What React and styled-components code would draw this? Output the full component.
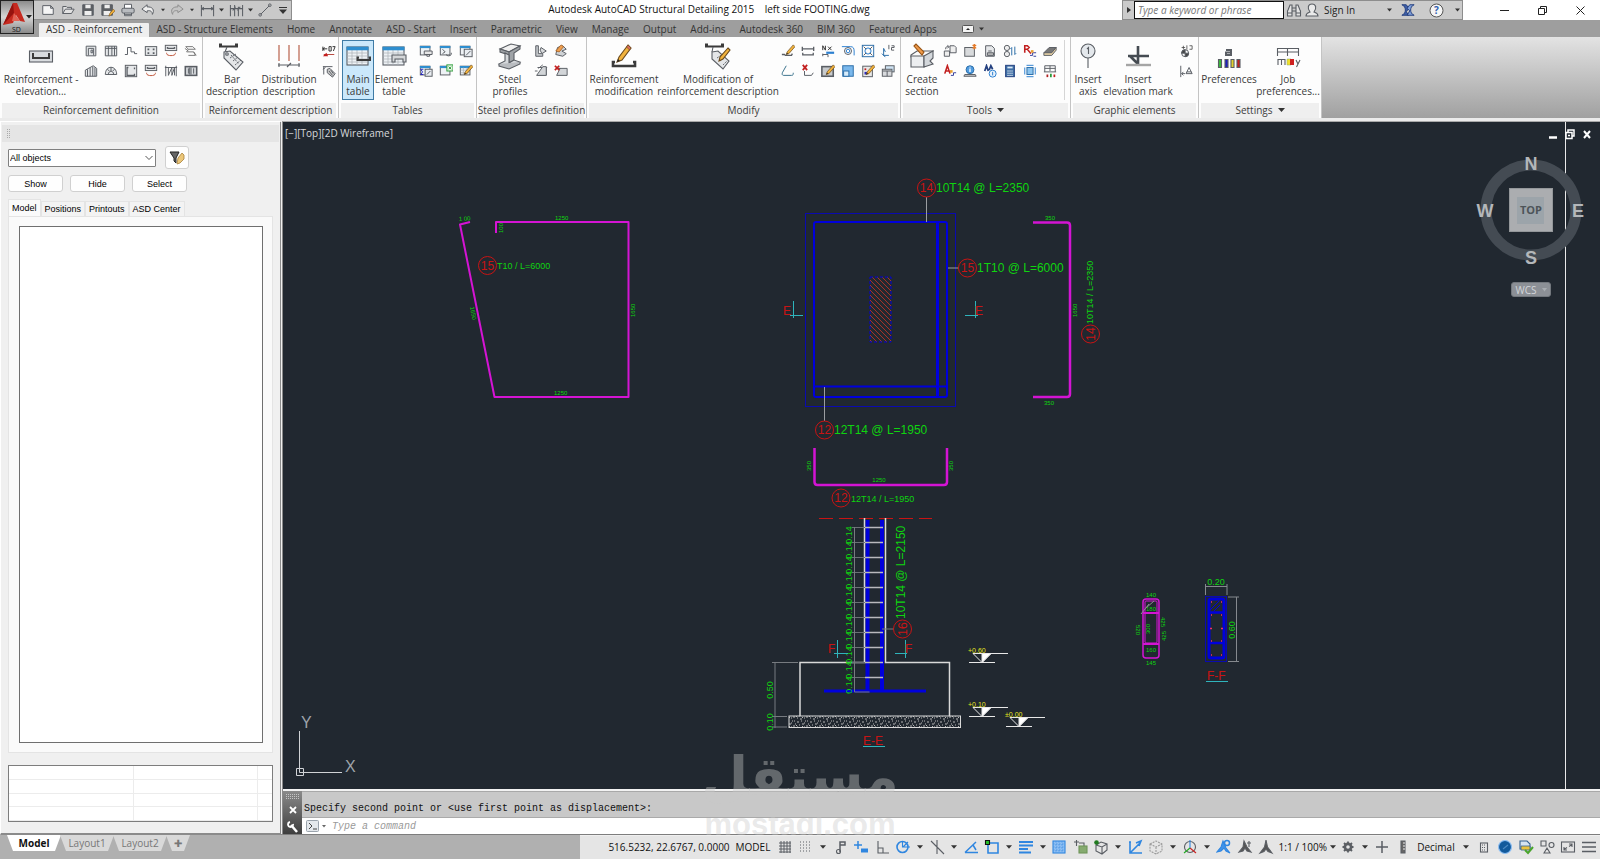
import React, { useState } from 'react';
import styled, { createGlobalStyle } from 'styled-components';

const GlobalStyle = createGlobalStyle`
  * {
    box-sizing: border-box;
  }
  html, body, #root {
    height: 100%;
    margin: 0;
  }
  body {
    overflow: hidden;
    background: #f0f0f0;
    font-family: 'Open Sans', 'Noto Sans', sans-serif;
    font-size: 10px;
    color: #2c2c2c;
  }
  button, input, select {
    font: inherit;
    color: inherit;
  }
  svg {
    display: block;
    flex: none;
  }
`;

const Window = styled.div`
  display: flex;
  flex-direction: column;
  height: 100vh;
`;

const PlainButton = styled.button`
  display: flex;
  align-items: center;
  justify-content: center;
  flex: none;
  padding: 0;
  border: 0;
  background: transparent;
`;

/* ---------- title bar ---------- */

const TitleBar = styled.header`
  display: flex;
  height: 20px;
  background: #fff;
`;

const AppButton = styled(PlainButton)`
  position: relative;
  z-index: 2;
  width: 34px;
  height: 34px;
  border: 1px solid #222;
  background: linear-gradient(#8c8c8c, #d6d6d6 50%, #8a8a8a);
`;

const QuickAccess = styled.div`
  display: flex;
  align-items: center;
  height: 20px;
  padding-left: 4px;
  padding-right: 1px;
  background: #c9c9c9;
  border: 1px solid #8d8d8d;
  border-left: 0;
`;

const BarButton = styled(PlainButton)`
  width: ${(p) => p.$width || 20}px;
  height: 18px;
`;

const Title = styled.h1`
  flex: 1;
  margin: 0;
  padding-left: 4px;
  text-align: center;
  font-size: 10px;
  font-weight: 400;
  line-height: 18px;
  white-space: pre;
  color: #111;
`;

const InfoCenter = styled.div`
  display: flex;
  align-items: center;
  width: 341px;
  height: 20px;
  background: #cbcbcb;
  border: 1px solid #8d8d8d;
`;

const Search = styled.input`
  width: 150px;
  height: 18px;
  padding: 0 3px;
  border: 1px solid #111;
  border-radius: 0;
  background: #fff;
  &::placeholder {
    color: #777;
    font-style: italic;
  }
`;

const SignIn = styled(PlainButton)`
  flex: 1;
  gap: 4px;
  justify-content: flex-start;
  color: #222;
  svg:last-child {
    margin-left: auto;
    margin-right: 4px;
  }
`;

const WindowButtons = styled.div`
  display: flex;
  padding-left: 22px;
  width: 137px;
`;

const WindowButton = styled(PlainButton)`
  width: 38px;
  height: 20px;
`;

/* ---------- ribbon ---------- */

const TabBar = styled.nav`
  display: flex;
  align-items: flex-end;
  height: 17px;
  padding-left: 39px;
  background: #9e9e9e;
`;

const RibbonTab = styled.button`
  height: 14px;
  padding: 0 7px 2px;
  border: 0;
  border-radius: 1px 1px 0 0;
  line-height: 12px;
  white-space: nowrap;
  color: #333;
  background: ${(p) => (p.$active ? '#efefef' : 'transparent')};
`;

const TabExtra = styled(PlainButton)`
  gap: 5px;
  height: 14px;
  padding-bottom: 2px;
  margin-left: 18px;
`;

const Ribbon = styled.section`
  display: flex;
  height: 84px;
  border-bottom: 3px solid #ebebeb;
  background: linear-gradient(#e3e3e3, #a0a0a0);
`;

const Panel = styled.section`
  display: flex;
  flex-direction: column;
  flex: none;
  width: ${(p) => p.$width}px;
  border-right: 1px solid #c4c4c4;
  background: #fdfdfd;
`;

const PanelBody = styled.div`
  display: flex;
  flex: 1;
  padding: 3px 0;
  padding-left: ${(p) => p.$pad || 3}px;
`;

const PanelTitle = styled.h2`
  display: flex;
  align-items: center;
  justify-content: center;
  gap: 5px;
  height: 15px;
  margin: 0 2px;
  padding-bottom: 2px;
  font-size: 10px;
  font-weight: 400;
  white-space: nowrap;
  background: #efefef;
  color: #3c3c3c;
`;

const BigButton = styled.button`
  display: flex;
  flex-direction: column;
  align-items: center;
  flex: none;
  width: ${(p) => p.$width}px;
  padding: 0;
  border: 1px solid ${(p) => (p.$active ? '#3f7ba5' : 'transparent')};
  background: ${(p) => (p.$active ? '#cbe8fb' : 'transparent')};
  line-height: 12px;
  white-space: pre;
  color: #3a3a3a;
`;

const IconGrid = styled.div`
  display: grid;
  grid-template-rows: 20px 20px;
  grid-auto-columns: 20px;
  grid-auto-flow: column;
  margin-top: 1px;
  margin-left: ${(p) => p.$gap || 0}px;
`;

const GridButton = styled(PlainButton)`
  width: 20px;
  height: 20px;
`;

const ToolsRule = styled.div`
  width: 1px;
  margin-left: 4px;
  background: #d5d5d5;
`;

/* ---------- palette ---------- */

const Workspace = styled.main`
  position: relative;
  display: flex;
  flex: 1;
  min-height: 0;
  overflow: hidden;
`;

const Palette = styled.aside`
  display: flex;
  flex-direction: column;
  flex: none;
  width: 283px;
  padding: 0 7px 11px;
  border: 1px solid #fff;
  border-right: 3px double #8b8b8b;
  border-bottom: 2px solid #8b8b8b;
  background: #f0f0f0;
  font-family: 'Liberation Sans', Arial, sans-serif;
  font-size: 9px;
  color: #000;
`;

const Grip = styled.div`
  display: flex;
  align-items: center;
  height: 17px;
  margin: 3px -6px 0;
  padding-left: 5px;
  background: #e5e5e5;
`;

const FilterRow = styled.div`
  display: flex;
  align-items: center;
  gap: 9px;
  margin-top: 4px;
`;

const SelectWrap = styled.div`
  position: relative;
  width: 148px;
  svg {
    position: absolute;
    right: 3px;
    top: 5px;
    pointer-events: none;
  }
`;

const ObjectSelect = styled.select`
  appearance: none;
  display: block;
  width: 100%;
  height: 18px;
  padding: 0 1px;
  border: 1px solid #808080;
  border-radius: 1px;
  background: #fff;
`;

const PushButton = styled.button`
  width: ${(p) => p.$width || 55}px;
  height: ${(p) => p.$height || 17}px;
  display: flex;
  align-items: center;
  justify-content: center;
  padding: 0;
  border: 1px solid #d0d0d0;
  border-radius: 3px;
  background: #fefefe;
`;

const ButtonRow = styled.div`
  display: flex;
  gap: 7px;
  margin-top: 6px;
`;

const PaletteTabs = styled.div`
  display: flex;
  align-items: flex-end;
  height: 17px;
  margin-top: 7px;
`;

const PaletteTab = styled.button`
  height: ${(p) => (p.$active ? 17 : 15)}px;
  padding: 0 3px;
  border: 1px solid #e4e4e4;
  border-bottom: 0;
  white-space: nowrap;
  background: ${(p) => (p.$active ? '#fafafa' : '#f3f3f3')};
`;

const TabPage = styled.div`
  flex: 1;
  display: flex;
  padding: 9px 9px 9px 10px;
  border: 1px solid #e4e4e4;
  background: #fafafa;
`;

const Tree = styled.div`
  flex: 1;
  border: 1px solid #6f6f6f;
  background: #fff;
`;

const PropertyTable = styled.table`
  height: 57px;
  margin-top: 12px;
  border: 1px solid #7d7d7d;
  border-spacing: 0;
  table-layout: fixed;
  background: #fff;
  td {
    padding: 0;
    border-right: 1px solid #ececec;
    border-bottom: 1px solid #ececec;
  }
  td:last-child {
    width: 14px;
    border-right: 0;
  }
`;

/* ---------- drawing ---------- */

const DrawingColumn = styled.div`
  display: flex;
  flex-direction: column;
  flex: 1;
  min-width: 0;
`;

const Viewport = styled.div`
  position: relative;
  flex: 1;
  min-height: 0;
  overflow: hidden;
  border-top: 1px solid #a9a9a9;
  background: #212830;
`;

const Sheet = styled.svg`
  width: 100%;
  height: 100%;
  font-family: 'Liberation Sans', Arial, sans-serif;
`;

const ViewLabel = styled.div`
  position: absolute;
  left: 2px;
  top: 4px;
  line-height: 14px;
  color: #d8dadd;
`;

const ViewButtons = styled.div`
  position: absolute;
  top: 6px;
  right: 7px;
  display: flex;
  gap: 5px;
`;

const CubeArea = styled.div`
  position: absolute;
  top: 28px;
  right: 14px;
  display: flex;
  flex-direction: column;
  align-items: center;
  gap: 12px;
`;

const Wcs = styled(PlainButton)`
  width: 40px;
  height: 15px;
  gap: 5px;
  border: 1px solid #73787e;
  border-radius: 3px;
  background: #8c9096;
  color: #d3d6da;
`;

const Command = styled.section`
  display: flex;
  height: 46px;
  border-top: 2px solid #f2f2f2;
  border-bottom: 1px solid #7d7d7d;
  font-family: 'Liberation Mono', monospace;
`;

const CommandHandle = styled.div`
  display: flex;
  flex-direction: column;
  align-items: center;
  justify-content: space-between;
  width: 19px;
  padding: 3px 0 1px;
  background: linear-gradient(#8a8a8a, #3e3e3e);
`;

const CommandBody = styled.div`
  display: flex;
  flex-direction: column;
  flex: 1;
`;

const History = styled.div`
  height: 27px;
  padding: 9px 2px 0;
  line-height: 16px;
  border-top: 1px solid #a8a8a8;
  border-bottom: 1px solid #aaa;
  background: #c8c8c8;
  color: #111;
`;

const CommandLine = styled.div`
  display: flex;
  align-items: center;
  flex: 1;
  gap: 2px;
  padding-left: 4px;
  background: #fff;
`;

const CommandInput = styled.input`
  flex: 1;
  height: 14px;
  border: 0;
  padding: 0 4px;
  outline: none;
  &::placeholder {
    color: #9a9a9a;
    font-style: italic;
  }
`;

const Watermark = styled.div`
  position: absolute;
  left: 0;
  right: 0;
  bottom: -8px;
  display: flex;
  flex-direction: column;
  align-items: center;
  pointer-events: none;
  color: rgba(200, 200, 200, 0.4);
  font-weight: 700;
`;

const WatermarkArabic = styled.span`
  font-family: 'DejaVu Sans', sans-serif;
  font-size: 54px;
  line-height: 60px;
`;

const WatermarkLatin = styled.span`
  font-family: 'Liberation Sans', Arial, sans-serif;
  font-size: 31px;
  line-height: 36px;
`;

/* ---------- status bar ---------- */

const StatusBar = styled.footer`
  display: flex;
  height: 24px;
  background: #b0b0b0;
`;

const LayoutTabs = styled.div`
  display: flex;
  align-items: flex-start;
  flex: 1;
  padding-left: 7px;
`;

const LayoutTab = styled.button`
  width: ${(p) => p.$width || 54}px;
  height: 16px;
  margin-right: -1px;
  padding: 0;
  border: 0;
  clip-path: polygon(0 0, 100% 0, calc(100% - 6px) 100%, 6px 100%);
  background: ${(p) => (p.$active ? '#fff' : '#d9d9d9')};
  color: ${(p) => (p.$active ? '#111' : '#777')};
  font-weight: ${(p) => (p.$active ? 700 : 400)};
`;

const StatusTools = styled.div`
  display: flex;
  align-items: center;
  justify-content: space-between;
  width: 1020px;
  padding: 0 1px 2px 27px;
  background: #e5e5e5;
  border-top: 1px solid #efefef;
`;

const StatusButton = styled(PlainButton)`
  width: ${(p) => p.$width || 20}px;
  height: 20px;
  white-space: nowrap;
  color: #111;
`;

/* ---------- icons ---------- */

const Icon = ({ size = 16, box = 16, children }) => (
  <svg width={size} height={size} viewBox={`0 0 ${box} ${box}`} fill="none" stroke="#5a5e64" strokeWidth="1.1" aria-hidden="true">
    {children}
  </svg>
);

const Caret = ({ size = 7 }) => (
  <svg width={size} height="4" viewBox="0 0 7 4" aria-hidden="true"><path d="M0 0h7L3.5 4z" fill="#333" /></svg>
);

const Pencil = () => (
  <g>
    <path d="M14 1l2 2-7 8-3 1 1-3z" fill="#f2b33d" stroke="#6b4a1c" strokeWidth=".8" />
    <path d="M6 12l1-2 1 1z" fill="#222" stroke="none" />
  </g>
);

const TableBase = ({ children }) => (
  <g>
    <rect x="1.5" y="2.5" width="11" height="10" fill="#eef2f5" />
    <path d="M1 3.5h12" stroke="#2e8ecf" strokeWidth="2.4" />
    {children}
  </g>
);

const glyphs = {
  newFile: <path d="M2 3h9l3 3v7H2zM11 3v3h3" fill="#f5f5f5" />,
  open: <path d="M2 12V4h4l1 1h5v2M2 12l3-5h10l-3 5z" fill="#e2e2e2" />,
  save: <g><path d="M2 2h12v12H2z" fill="#5d6064" /><path d="M5 2h6v4H5zM4 9h8v5H4z" fill="#eee" stroke="none" /></g>,
  saveAs: <g><path d="M1 2h12v12H1z" fill="#5d6064" /><path d="M4 2h6v4H4zM3 9h8v5H3z" fill="#eee" stroke="none" /><path d="M14 7l2 2-5 5-2 1 1-3z" fill="#f2b33d" stroke="#7a531c" strokeWidth=".7" /></g>,
  print: <g><path d="M4 6V1.500h8V6M4 10v4.500h8V10" fill="#fff" /><rect x="1" y="6" width="14" height="5.500" rx="1.500" fill="#b9bcc0" /><path d="M4 13h8" /></g>,
  undo: <path d="M7 2L1 7l6 4V9c4-1 6 1 6 4 3-5 0-9-6-8.500z" fill="#eee" />,
  redo: <path d="M9 2l6 5-6 4V9c-4-1-6 1-6 4-3-5 0-9 6-8.500z" fill="#c4c4c4" stroke="#8d8d8d" />,
  dim: <path d="M1.500 2v12M14.500 2v12M2 6h12M4 4.500L2 6l2 1.500M12 4.500L14 6l-2 1.500" />,
  dimCont: <path d="M1.500 2v12M6 2v12M10 4v10M14.500 2v12M2 6h12M4 8l3-4M9 8l3-4" />,
  line: <g><path d="M3 13L13 3" /><circle cx="2.500" cy="13.500" r="1.500" /><circle cx="13.500" cy="2.500" r="1.500" /></g>,
  binoculars: <g><path d="M2 8l2-5h2v11H1.500V9zM14 8l-2-5h-2v11h4.500V9zM6 6h4M6 9h4" fill="#e3e3e3" /><path d="M2 11h4M10 11h4" /></g>,
  user: <g><path d="M2 14c0-3 3-3.500 4-4-3-4-2-8 2-8s5 4 2 8c1 .5 4 1 4 4z" fill="#eaeaea" /></g>,
  exchange: <g><path d="M1 2h5l3 4-3 4 3 4H1c3-1 4-4 4-6S4 3 1 2z" fill="#3f5fa8" stroke="#24407f" /><path d="M15 2h-5L7 6l3 3-3 5h8c-3-1-4-4-4-6s1-5 4-6z" fill="#7f9fdc" stroke="#24407f" /></g>,
  frameElevation: <g><path d="M2.500 2.500h11v11h-11z" fill="#e6e8ea" /><path d="M5 5h6v8M5 5v8M8 7h2v3H8z" /></g>,
  wall: <g><path d="M1.500 2.500h13v11h-13z" fill="#e6e8ea" /><path d="M5 2.500v11M9 2.500v11M12 2.500v11M1.500 5h13" /></g>,
  step: <path d="M1 12h3V4h4v5h4v2h3" />,
  dots: <g><rect x="1.500" y="3" width="13" height="10" fill="#e6e8ea" /><path d="M4 6h2M10 6h2M4 10.500h2M10 10.500h2" strokeWidth="2" /></g>,
  beam: <g><rect x="1.500" y="1.500" width="13" height="6" fill="#e6e8ea" /><path d="M4 5h8M4 3.500v2M12 3.500v2" strokeWidth="1.600" /><path d="M3 10v1c0 3 10 3 10 0v-1" stroke="#c0563c" /></g>,
  mesh: <path d="M2 3h8l3 3H5zM5 6L3 9h8l2 4H5M1 5l4 3M11 9l3 4" stroke="#777" />,
  hall: <g><path d="M1.500 7l9-5 4 3v9h-13z" fill="#e6e8ea" /><path d="M4 6v8M7 4v10M10 3v11M12.500 4v10" /></g>,
  dome: <g><path d="M1.500 12c0-11 13-11 13 0z" fill="#e6e8ea" /><path d="M5 12c0-5 6-5 6 0M8 4v4M4 6l2 2M12 6l-2 2" /></g>,
  bracket: <g><rect x="1.500" y="1.500" width="13" height="13" fill="#e6e8ea" /><path d="M5 4H3.500v9H12v-2M12 4v2" strokeWidth="1.500" /></g>,
  hatch: <g><path d="M2 2v12M14 2v12M5 4v9l4-9v9l3-9v9M1 4h14" /></g>,
  cage: <g><rect x="1.500" y="3" width="13" height="10" fill="#d9dcdf" strokeWidth="1.800" /><path d="M5 5v6M8 4v8M11 5v6M6.500 4v8" /></g>,
  dimText: <g><path d="M1 3v5M1 5.500h5M3 4L1 5.500 3 7M8 3h2.500v5H8zM12 3h3l-2 5" stroke="#333" /><path d="M2 12h12" stroke="#b5453c" /><path d="M1 14l4-4 2 4z" fill="#c51e1e" stroke="none" /></g>,
  tagSmall: <g><path d="M1 3h11M2 3v9M1 6l3-2" /><path d="M6 6l3-1 6 6-3 4-6-5z" fill="#c8c8c8" /><path d="M8 8l4 5M10 7l3 4" /></g>,
  tableTag: <TableBase><path d="M6 8h9v4H6zM9 12v2h3v-2" fill="#e7e7e7" /></TableBase>,
  tableEdit: <TableBase><path d="M4 6l3 3-3 2M8 12c1 2 5 2 6 0v-2" /></TableBase>,
  tableFormat: <TableBase><rect x="6" y="6" width="9" height="8.500" fill="#e9edf1" /><path d="M8 13l5-5" /></TableBase>,
  tableFormula: <TableBase><path d="M5 6H2l2 3-2 3h3" stroke="#2222c0" /><rect x="7" y="6" width="8" height="8" fill="#e9edf1" /><path d="M9 12l4-4" /></TableBase>,
  tableExport: <TableBase><rect x="9" y="1" width="7" height="7" fill="#e7f6e6" stroke="#2c9b3a" /><path d="M11 3l3 3M14 3l-3 3" stroke="#2c9b3a" /></TableBase>,
  tablePencil: <TableBase><path d="M2 7h10M2 10h10M5 4v8M9 4v8" stroke="#aaa" strokeWidth=".7" /><Pencil /></TableBase>,
  plate: <g><path d="M2 2h3v9h5v3H2z" fill="#c8cbce" /><path d="M8 4l6 4-5 3-2-4z" fill="#d8dadc" /></g>,
  profileEdit: <g><path d="M4 4l6-2 4 4-5 2 5 3-4 3-8-2z" fill="#cfd2d5" /><path d="M2 8l6-7 3 2-5 6z" fill="#f0a050" stroke="#9b5517" strokeWidth=".8" /></g>,
  profileCut: <g><path d="M4 4h11M4 13h9M14 4v9M1 8h3M5 5l5-4" /><path d="M3 13L10 3h4v10z" fill="#d2d5d8" /></g>,
  profileDelete: <g><path d="M4 5h11v8H3l4-8z" fill="#d2d5d8" /><path d="M1 2l5 5M6 2L1 7" stroke="#c22020" strokeWidth="2" /></g>,
  barPencil: <g><path d="M1 12h3l1 1h7l1-2" strokeWidth="1.500" /><Pencil /></g>,
  barDim: <path d="M1.500 3v5M14.500 3v5M2 5.500h12M2 10v2.500h12V10" strokeWidth="1.500" />,
  nx: <g><path d="M2 7V2l3 5V2M8 3l4 4M12 3L8 7" stroke="#333" /><path d="M6 10h9" stroke="#2b7fd0" strokeWidth="2.500" /><path d="M2 14v-3M2 12h6v3" /></g>,
  pipe: <g><path d="M1 3h10c3 0 4 2 4 5v5" stroke="#2b7fd0" /><circle cx="8" cy="8" r="4" /><circle cx="8" cy="8" r="2" stroke="#2b7fd0" /></g>,
  target: <g><rect x="1.500" y="1.500" width="13" height="13" stroke="#2b6da8" /><circle cx="8" cy="8" r="3.500" stroke="#2b7fd0" /><path d="M3 3l3 3M13 3l-3 3M3 13l3-3M13 13l-3-3" /></g>,
  axisTag: <g><path d="M3 5v8h6M1 11l4 4M5 9l-2-4" stroke="#2b6da8" /><path d="M9 6V1M12 2h3v2h-3v3h3" /></g>,
  polyOpen: <path d="M6 2L1.500 10c-.5 2 0 3 1.500 3h9c2 0 2-1 2-3" stroke="#38708a" />,
  deleteBar: <g><path d="M4 8v5h8l2-3" /><path d="M2 1l5 6M7 1L2 7" stroke="#c22020" strokeWidth="2" /></g>,
  sheetPencil: <g><rect x="1" y="3" width="13" height="11" fill="#c7cacd" strokeWidth="1.800" /><Pencil /></g>,
  blueBox: <g><rect x="2" y="2" width="12" height="12" fill="#7ab8ec" stroke="#2b6da8" /><rect x="3" y="8" width="6" height="6" fill="#d8ecfa" stroke="#2b6da8" /></g>,
  colorPencil: <g><rect x="2" y="2.500" width="11" height="12" fill="#e8e8e8" /><path d="M4 5h2v2H4z" fill="#c22020" stroke="none" /><path d="M4 9h3v3H4z" fill="#2a2ac0" stroke="none" /><Pencil /></g>,
  tableCopy: <g><rect x="5" y="2" width="10" height="7" fill="#cfe3f3" /><rect x="1.500" y="6" width="11" height="8" fill="#d8dadd" /><path d="M2 8h10M7 8v6" /></g>,
  copyDoc: <g><path d="M1.500 8h6v6h-6zM8 2h5l2 2v6H8z" fill="#eee" /><path d="M3 6c0-3 1-3 3-3M5 1.500L7 3 5 5" /></g>,
  newSheet: <g><rect x="2" y="4" width="11" height="10" fill="#d8dadc" /><path d="M11 1l4 4M15 1l-4 4M13 0v6" stroke="#e57b2a" strokeWidth="1.600" /></g>,
  docPrint: <g><path d="M3 2h7l3 3v9H3z" fill="#e6e8ea" /><path d="M5 10h7v3H5zM6 8h4" fill="#bbb" /></g>,
  renumber: <g><circle cx="4.500" cy="4.500" r="3" fill="#eee" /><circle cx="4.500" cy="11.500" r="3" fill="#eee" /><path d="M10 13V4M8.500 5.500L10 4M13.500 3v9M15 10.500L13.500 12" stroke="#2b6da8" /></g>,
  replace: <g><path d="M2 10V2h3l2 2-2 2H2M5 6l4 5" stroke="#c22020" strokeWidth="1.800" /><path d="M8 13h3v-3h4M12 14h3" stroke="#333c9a" /><path d="M9 7h3v3H9z" fill="#e9a032" stroke="none" /></g>,
  eraser: <g><path d="M1 10l6-6h8l-5 6z" fill="#777" /><path d="M1 10h9l5-6v3l-5 6H1z" fill="#e9d3a6" /></g>,
  textA: <g><path d="M2 11l3-9 3 9M3 8h4" stroke="#c22020" strokeWidth="1.800" /><path d="M9 13h3v-3h3" stroke="#333c9a" /><path d="M8 7h3v3H8z" fill="#e9a032" stroke="none" /></g>,
  info: <g><circle cx="8" cy="6.500" r="4.500" fill="#4f9be0" stroke="#2b6da8" /><path d="M8 5v4M8 3v1" stroke="#fff" strokeWidth="1.500" /><path d="M2 12h12l1 2H1z" fill="#d0d0d0" /></g>,
  findInfo: <g><path d="M2 8l2-6 2 6M7 7l2-5 2 4" stroke="#24407f" strokeWidth="2" /><circle cx="11" cy="11" r="4" fill="#e6f1fb" stroke="#2b7fd0" /><path d="M11 9v4" stroke="#2b7fd0" /></g>,
  calculator: <g><rect x="3" y="1.500" width="10" height="13" fill="#3f6fa6" stroke="#24407f" /><path d="M5 4h6" stroke="#dbe9f7" strokeWidth="2" /><path d="M5 8h6M5 10.500h6M5 13h6" stroke="#fff" strokeDasharray="1.500 .8" /></g>,
  align: <g><rect x="4.500" y="4" width="7" height="8" fill="#8cc4ee" stroke="#2b6da8" /><path d="M2 4v8M14 4v8M4 1.500h8M4 14.500h8" stroke="#2b7fd0" /></g>,
  tableColor: <g><path d="M2 9V2h12v7M2 5h12M8 2v6M1 9h14" /><path d="M4 12h2v3H4z" fill="#b02020" stroke="none" /><path d="M8 11h2v4H8z" fill="#2a9a3a" stroke="none" /><path d="M12 12h2v3h-2z" fill="#c22020" stroke="none" /></g>,
  level: <g><path d="M5 2v4M3 4h4M9 1.500v5M12 2h3v4h-3" stroke="#444" strokeWidth=".9" /><circle cx="7" cy="10.500" r="4" fill="#fff" /><path d="M7 6.500v8a4 4 0 0 0 4-4H3a4 4 0 0 1 4-4z" fill="#444" /></g>,
  annotate: <path d="M2 2v13M3 11h4M5 9l-2 2 2 2M8 11l3.500-7 3.500 7zM9 9h5" />,
};

const bigGlyphs = {
  elevation: <g><rect x="4.500" y="10" width="23" height="11" fill="#d9dcdf" /><path d="M9 13H8v4h16v-4h-1" strokeWidth="2" stroke="#3b3b3b" /></g>,
  tag: <g><path d="M6 3.500H4v2h17v-2h-2" strokeWidth="2" stroke="#3b3b3b" /><path d="M11 6l-2 5" /><path d="M8 11l6-1 13 11-7 8L8 17z" fill="#e4e6e8" /><circle cx="11" cy="13" r="1.300" /><path d="M14 17l6-4M17 20l5-4M19 24l6-5M15 14l8 9" strokeWidth=".9" strokeDasharray="2 1" /></g>,
  distribution: <g><path d="M6 4v16M16 4v16M26 4v16" stroke="#b3543d" /><path d="M5 24h22M6 22v4M26 22v4M14 26l4-4" /></g>,
  mainTable: <g><rect x="5" y="6" width="21" height="18" fill="#eef2f5" /><path d="M5 12h21M5 15h21M5 18h21M5 21h21M10 9v15M15 9v15M20 9v15" stroke="#a9afb5" strokeWidth=".7" /><path d="M4.500 7.500h22" stroke="#2e8ecf" strokeWidth="3.600" /><path d="M17 16.500h-1.500v2.500h12.500v-2.500h-1.500" strokeWidth="2" stroke="#3b3b3b" /></g>,
  elementTable: <g><rect x="5" y="6" width="21" height="18" fill="#eef2f5" /><path d="M5 12h21M5 15h21M5 18h21M5 21h21M10 9v15M15 9v15M20 9v15" stroke="#a9afb5" strokeWidth=".7" /><path d="M4.500 7.500h22" stroke="#2e8ecf" strokeWidth="3.600" /><path d="M14 14h14v7h-3v-3h-8v3h-3z" fill="#d5d7d9" /></g>,
  steel: <g><path d="M6 8l11-5 9 2-11 6z" fill="#f1f1f1" /><path d="M6 8v3l9 3v-3zM15 11l11-6v3l-6 4v7l-5 3v-8z" fill="#9fa3a7" /><path d="M5 23l6-3V12l4 2v8l5-3 6 2-11 6z" fill="#d6d9dc" /><path d="M5 23v2l10 3 11-5v-2" fill="#b9bcc0" /></g>,
  barPencil: <g><path d="M7 21H5v4h22v-4h-2" strokeWidth="2.600" stroke="#3b3b3b" /><path d="M20 4l3 3-9 12-5 2 2-5z" fill="#f2b33d" stroke="#6b4a1c" /><path d="M20 4l3 3-1.500 2-3-3z" fill="#d76c5c" stroke="#6b4a1c" strokeWidth=".6" /><path d="M9 21l1-3 2 2z" fill="#222" stroke="none" /></g>,
  tagPencil: <g><path d="M6 3.500H4v2h17v-2h-2" strokeWidth="2" stroke="#3b3b3b" /><path d="M11 6l-1 5" /><path d="M10 11l6-1 11 10-6 8-11-10z" fill="#e4e6e8" /><path d="M15 17l6-4M18 20l5-4M21 24l4-4" strokeWidth=".9" strokeDasharray="2 1" /><path d="M26 7l2 2-7 9-4 2 1-4z" fill="#f2b33d" stroke="#6b4a1c" /></g>,
  section: <g><path d="M5 14l6-4h16l-4 6H5z" fill="#fafafa" /><path d="M5 15h13v11H5z" fill="#eceef0" /><path d="M18 15l9-5v7l-3 3 3 3-9 3z" fill="#d3d7db" /><path d="M8 5l2-2 8 8-2 3z" fill="#ef9a4a" stroke="#985516" /></g>,
  axis: <g><circle cx="16" cy="10" r="7" fill="#e4e8ec" /><path d="M16 17v10M15 8l1.500-1.500V13" /></g>,
  elevationMark: <g><path d="M6 15h21M16 5v18M8 15l8 8" strokeWidth="2.600" stroke="#454b52" /><path d="M4 24h25" stroke="#a5a5a5" strokeWidth="2.400" /></g>,
  preferences: <g><path d="M13 9h5v5h-5v-2.500h5" strokeWidth="2" /><path d="M5.500 18.500h3v8h-3z" fill="#3dbb3d" /><path d="M12 18.500h3v8h-3z" fill="#2020c0" /><path d="M18 18.500h3v8h-3z" fill="#e3d22c" /><path d="M24 18.500h3v8h-3z" fill="#c22020" /></g>,
  job: <g><path d="M5.500 15V7.500h21V15M5.500 11h21M15.500 7.500V15" /><path d="M6 24v-5.500h7V24M9.500 19v5M24 19l2 4 2-4M26 23l-1.500 3" /><path d="M15 18h4v6h-4z" fill="#f2df2a" stroke="#8a6" strokeWidth=".5" /><path d="M18 18h4v6h-4z" fill="#cf2020" stroke="none" /></g>,
};

const statusGlyphs = {
  grid: <path d="M4 2v12M7 2v12M10 2v12M13 2v12M2 4h12M2 7h12M2 10h12M2 13h12" strokeWidth="1" />,
  snap: <path d="M2 3h12M2 6h12M2 9h12M2 12h12" strokeDasharray="1 2" />,
  infer: <g><path d="M8 13V3h5v3H8" strokeWidth="1.500" /><circle cx="6.500" cy="12.500" r="2" /></g>,
  dynamic: <g><path d="M5 2v8M1 6h8" stroke="#2f86e0" strokeWidth="1.500" /><path d="M8 11.500h7" stroke="#2f86e0" strokeWidth="4" /></g>,
  ortho: <path d="M4 2v12h11M4 9h5v5" />,
  polar: <g><circle cx="7.500" cy="8" r="5.500" stroke="#2f86e0" strokeWidth="1.600" /><path d="M7.500 2v6H15M8 8l5-5" stroke="#2f86e0" /></g>,
  iso: <path d="M8 1v14M2 2l13 13" />,
  track: <path d="M2 13.500h13M2 13.500L13 3M10 6l3 5" stroke="#2f86e0" strokeWidth="1.500" />,
  osnap: <g><path d="M4 4h10v10H4z" stroke="#2f86e0" strokeWidth="1.600" /><path d="M1.500 1.500h4v4h-4z" fill="#28c228" stroke="#111" /></g>,
  weight: <path d="M1 3h14M1 6.500h14M1 10h9M1 13.500h12" stroke="#2f86e0" strokeWidth="2" />,
  transparency: <g><rect x="2" y="2" width="12" height="12" fill="#8fc0f4" stroke="#2f86e0" /><path d="M2 5h12M2 8h12M2 11h12M5 2v12M8 2v12M11 2v12" stroke="#4f97e4" strokeDasharray="1.500 1.500" /></g>,
  cycling: <g><path d="M2 3h5M4.500 1v6M7 4h5v3" /><rect x="7" y="7" width="8" height="7" fill="#86ab70" stroke="#6f955a" /></g>,
  solid: <g><path d="M3 6l5-3 6 2v6l-5 4-6-3zM3 6l6 2 5-3M9 8v7" /><circle cx="3.500" cy="3.500" r="2.300" fill="#1f7a1f" stroke="none" /></g>,
  ucs: <path d="M3 3v11h12M3 14L13 4M9 4l5-2-2 5M2 3h2" stroke="#2f86e0" strokeWidth="1.600" />,
  cube: <path d="M2 5l6-3 6 3v7l-6 3-6-3zM2 5l6 3 6-3M8 8v7" stroke="#9b9b9b" strokeDasharray="2 1" />,
  gizmo: <g><circle cx="8" cy="8" r="5.500" /><path d="M8 1v8" stroke="#2f86e0" /><path d="M8 9l6 5" stroke="#c22" /><path d="M8 9l-6 5" stroke="#2a2" /></g>,
  annoBlue: <g><path d="M7 2L5 8l-4 5 4-1 3-3 2 3 4 2-4-5z" fill="#3f93ea" stroke="#2f86e0" /><circle cx="11" cy="4" r="2.500" stroke="#2f86e0" strokeWidth="1.500" /></g>,
  annoAuto: <g><path d="M7 2L6 8l-4 5 4-1 2-3 2 3 4 1-4-5z" fill="#555" /><path d="M10 4h4M12 2v6" /></g>,
  annoScale: <path d="M8 1L6.500 8 2 14l4-1.500L8 10l2 2.500L14 14 9.500 8z" fill="#555" />,
  gear: <g><circle cx="8" cy="8" r="3.500" fill="#777" stroke="#666" strokeWidth="2" /><path d="M8 2.500v11M2.500 8h11M4 4l8 8M12 4l-8 8" strokeWidth="1.800" /><circle cx="8" cy="8" r="1.800" fill="#e5e5e5" stroke="none" /></g>,
  plus: <path d="M8 2v12M2 8h12" strokeWidth="1.500" />,
  ruler: <g><path d="M6 2h4v12H6z" fill="#666" /><path d="M8 4h2M8 7h2M8 10h2" stroke="#eee" /></g>,
  quick: <g><rect x="4.500" y="4" width="7" height="9" /><path d="M6 6h4M6 8.500h4M6 11h4" strokeDasharray="1 1" /></g>,
  graphics: <g><circle cx="8" cy="8" r="6.500" fill="#125a9c" stroke="#8fc0f4" /><path d="M6 10l5-4" stroke="#4d8bc4" /></g>,
  plot: <g><path d="M2 2h7l3 3v5H2z" fill="#d5e3f0" stroke="#35628f" /><path d="M3 7h9v4H3z" fill="#e9c23c" stroke="#35628f" strokeWidth=".8" /><path d="M7 11l3 3 5-6" stroke="#4aa52c" strokeWidth="2" /></g>,
  isolate: <g><path d="M2 2h5v5H2zM5 14l3-5 3 5z" /><circle cx="12.500" cy="6" r="2.500" /></g>,
  clean: <g><rect x="1.500" y="3" width="13" height="10" /><path d="M4 10.500l3-2M4 8v3h3M12 5.500l-3 2M12 8V5H9" /></g>,
  menu: <path d="M1 3.500h14M1 8h14M1 12.500h14" strokeWidth="1.500" />,
};

const panels = [
  {
    title: 'Reinforcement definition', width: 203, gap: 2,
    big: [['elevation', 'Reinforcement -\nelevation...', 76]],
    small: ['frameElevation', 'hall', 'wall', 'dome', 'step', 'bracket', 'dots', 'beam', 'beam', 'hatch', 'mesh', 'cage'],
  },
  {
    title: 'Reinforcement description', width: 136, pad: 2, gap: 0,
    big: [['tag', 'Bar\ndescription', 54], ['distribution', 'Distribution\ndescription', 60]],
    small: ['dimText', 'tagSmall'],
  },
  {
    title: 'Tables', width: 138, gap: 2,
    big: [['mainTable', 'Main\ntable', 32], ['elementTable', 'Element\ntable', 40]],
    small: ['tableTag', 'tableFormula', 'tableEdit', 'tableExport', 'tableFormat', 'tablePencil'],
  },
  {
    title: 'Steel profiles definition', width: 110, pad: 12, gap: 0,
    big: [['steel', 'Steel\nprofiles', 42]],
    small: ['plate', 'profileCut', 'profileEdit', 'profileDelete'],
  },
  {
    title: 'Modify', width: 314, gap: 0,
    big: [['barPencil', 'Reinforcement\nmodification', 68], ['tagPencil', 'Modification of\nreinforcement description', 120]],
    small: ['barPencil', 'polyOpen', 'barDim', 'deleteBar', 'nx', 'sheetPencil', 'pipe', 'blueBox', 'target', 'colorPencil', 'axisTag', 'tableCopy'],
  },
  {
    title: 'Tools', width: 170, more: true, rule: true, gap: 0,
    big: [['section', 'Create\nsection', 36]],
    small: ['copyDoc', 'textA', 'newSheet', 'info', 'docPrint', 'findInfo', 'renumber', 'calculator', 'replace', 'align', 'eraser', 'tableColor'],
  },
  {
    title: 'Graphic elements', width: 128, gap: 2,
    big: [['axis', 'Insert\naxis', 28], ['elevationMark', 'Insert\nelevation mark', 72]],
    small: ['level', 'annotate'],
  },
  {
    title: 'Settings', width: 123, more: true,
    big: [['preferences', 'Preferences', 54], ['job', 'Job\npreferences...', 64]],
    small: [],
  },
];

const ribbonTabs = ['ASD - Reinforcement', 'ASD - Structure Elements', 'Home', 'Annotate', 'ASD - Start', 'Insert', 'Parametric', 'View', 'Manage', 'Output', 'Add-ins', 'Autodesk 360', 'BIM 360', 'Featured Apps'];

const statusItems = [
  'grid', 'snap', '|', 'infer', 'dynamic', 'ortho', 'polar', '|', 'iso', '|', 'track', 'osnap', '|', 'weight', '|',
  'transparency', 'cycling', 'solid', '|', 'ucs', 'cube', '|', 'gizmo', '|', 'annoBlue', 'annoAuto', 'annoScale',
];

/* ---------- drawing parts ---------- */

const GREEN = '#0fd40f';
const RED = '#c81414';
const PINK = '#d414d4';
const BLUE = '#0000dc';
const CYAN = '#2fb4bc';
const GREY = '#9a9da1';

const Note = ({ x, y, size = 6, rotate, anchor, color = GREEN, children }) => (
  <text x={x} y={y} fontSize={size} fill={color} textAnchor={anchor} transform={rotate ? `rotate(${rotate} ${x} ${y})` : undefined}>
    {children}
  </text>
);

const Mark = ({ x, y, rotate = 0, children }) => (
  <g transform={`translate(${x} ${y}) rotate(${rotate})`}>
    <circle r="9" fill="none" stroke={RED} />
    <text y="4" fontSize="12" fill={RED} textAnchor="middle">{children}</text>
  </g>
);

const Level = ({ x, y, children }) => (
  <g stroke="#e8e8e8" fill="none">
    <path d={`M${x - 9} ${y - 9}h35M${x - 9} ${y - 9}l9 9 9-9M${x - 13} ${y}h26`} />
    <path d={`M${x} ${y - 9}h9l-9 9z`} fill="#fff" />
    <text x={x - 14} y={y - 10} fontSize="7" fill="#e6e620" stroke="none">{children}</text>
  </g>
);

const Plan = () => (
  <g fill="none" stroke={BLUE}>
    <rect x="805.5" y="213.5" width="150" height="193" stroke="#0a0ab0" />
    <rect x="814" y="222" width="133" height="175" rx="2" strokeWidth="2" />
    <path d="M937.500 222v175" strokeWidth="3" />
    <path d="M814 386.500h133" strokeWidth="2" />
    <rect x="870" y="277" width="21" height="65" fill="url(#columnHatch)" strokeDasharray="3 2" />
    <path d="M926.500 197v25M948 268h11M824.500 387v34" stroke={GREY} />
    <path d="M793.500 301v17M790 315.500h13M975.500 301v17M965 315.500h13" stroke={CYAN} />
  </g>
);

const Brackets = () => (
  <g fill="none" stroke={PINK} strokeWidth="2" strokeLinejoin="round">
    <path d="M470 222l-10 2.500L494.500 397h134V222H496v11" />
    <path d="M1033 222.500h34q3 0 3 3V394q0 3-3 3h-34" strokeWidth="2.500" />
    <path d="M814.500 448v34q0 3 3 3H944q3 0 3-3v-34" strokeWidth="2.500" />
  </g>
);

const Footing = () => {
  const ties = Array.from({ length: 11 }, (_, i) => 527 + i * 15);
  return (
    <g fill="none" stroke="#d9d9d9">
      <path d="M819 518.500h113" stroke={RED} strokeDasharray="14 6" />
      <path d="M867.500 520v171M882 520v171" stroke={BLUE} strokeWidth="4" />
      <path d="M824 691h102" stroke={BLUE} strokeWidth="3" />
      <path d="M864.500 518v144.500H800V716M885.500 518v144.500h64V716" strokeWidth="1.500" />
      {ties.map((y) => (
        <g key={y}>
          <path d={`M865 ${y + 0.5}h18`} stroke="#b9b9bd" strokeWidth="1.500" />
          <path d={`M852 ${y + 0.5}h13`} stroke="#6c7076" />
          <Note x={852} y={y + 8} size={9} rotate={-90} anchor="middle"><tspan stroke="none">0.14</tspan></Note>
        </g>
      ))}
      <path d="M854.500 527v165h15M775 662v66M772 662.500h26M772 716.500h15M772 727h15M882 629h12" stroke="#777b80" />
      <rect x="789" y="716" width="171.500" height="11.500" fill="url(#gravel)" />
      <path d="M837.500 640v18M834 653.500h14M905.500 640v18M895 653.500h12M863 746.500h22" stroke={CYAN} />
    </g>
  );
};

const Stirrups = () => (
  <g fill="none">
    <g stroke={PINK} strokeWidth="1.500">
      <rect x="1143" y="599" width="16" height="59" rx="3" />
      <rect x="1145" y="601" width="12" height="42" rx="1" strokeWidth="1" />
      <path d="M1143 613h16M1143 644h16" strokeWidth="2" />
      <path d="M1141 614l8-10M1146 608l8-7" stroke="#8b8f94" strokeWidth="1" />
    </g>
    <g stroke={BLUE}>
      <rect x="1205.5" y="596.500" width="21" height="65" stroke="#0a0ab0" />
      <rect x="1209" y="599" width="15" height="59" rx="2" strokeWidth="3" />
      <path d="M1208 612.500h16M1208 643h16" strokeWidth="2.500" />
      <path d="M1210 610l9-9M1214 611l6-6" />
    </g>
    <path d="M1205 586.500h22M1205.500 584v11M1227 584v11M1228 597h11M1228 661.500h11M1236.500 597v65" stroke="#85898e" />
    <path d="M1211 602h1M1221 602h1M1211 615h1M1221 615h1M1210 628.500h2M1221 628.500h2M1211 641h1M1221 641h1M1211 655h1M1221 655h1" stroke="#f03060" strokeWidth="1.500" />
    <path d="M1206 681.500h22" stroke={CYAN} />
  </g>
);

/* Model space, drawn in screen units measured from the window's top-left corner. */
const ModelSpace = () => (
  <Sheet role="img" aria-label="Footing drawing">
    <defs>
      <pattern id="columnHatch" width="5" height="5" patternUnits="userSpaceOnUse">
        <path d="M-1 -1l7 7M-1 4l2 2M4 -1l2 2" stroke="#a33327" strokeWidth="1" />
      </pattern>
      <pattern id="gravel" width="13" height="9" patternUnits="userSpaceOnUse">
        <path d="M1 1h1M4 2h2M8 1h1M11 3h1M2 4h1M6 5h1M9 4h2M0 6h2M4 7h1M7 8h2M11 7h1M3 5.500h1M9 6.500h1M12 1h1" stroke="#b8b8b8" strokeWidth="1" />
      </pattern>
    </defs>
    <g transform="translate(-283 -122)">
      <Plan />
      <Brackets />
      <Footing />
      <Stirrups />

      <Mark x={926.5} y={188}>14</Mark>
      <Note x={936} y={192} size={12}>10T14 @ L=2350</Note>
      <Mark x={967.5} y={268}>15</Mark>
      <Note x={977} y={272} size={12}>1T10 @ L=6000</Note>
      <Mark x={824.5} y={430}>12</Mark>
      <Note x={834} y={434} size={12}>12T14 @ L=1950</Note>
      <Mark x={487.5} y={265.5}>15</Mark>
      <Note x={497} y={269} size={9}>T10 / L=6000</Note>
      <Mark x={841} y={498}>12</Mark>
      <Note x={851} y={502} size={9}>12T14 / L=1950</Note>
      <Mark x={1090.5} y={334} rotate={-90}>14</Mark>
      <Note x={1093} y={324} size={9} rotate={-90}>10T14 / L=2350</Note>
      <Mark x={902.5} y={629} rotate={-90}>16</Mark>
      <Note x={905} y={619} size={12} rotate={-90}>10T14 @ L=2150</Note>

      <Note x={459} y={221} rotate={-4}>1 00</Note>
      <Note x={555} y={220}>1250</Note>
      <Note x={554} y={395}>1250</Note>
      <Note x={503} y={233} rotate={-90}>100</Note>
      <Note x={635} y={317} rotate={-90}>1650</Note>
      <Note x={470} y={307} rotate={80}>1650</Note>
      <Note x={1050} y={220} anchor="middle">350</Note>
      <Note x={1049} y={405} anchor="middle">350</Note>
      <Note x={1077} y={317} rotate={-90}>1650</Note>
      <Note x={811} y={471} rotate={-90}>350</Note>
      <Note x={953} y={471} rotate={-90}>350</Note>
      <Note x={879} y={482} anchor="middle">1250</Note>
      <Note x={773} y={690} size={9} rotate={-90} anchor="middle">0.50</Note>
      <Note x={773} y={722} size={9} rotate={-90} anchor="middle">0.10</Note>

      <Note x={1151} y={597} anchor="middle">140</Note>
      <Note x={1151} y={611} anchor="middle">180</Note>
      <Note x={1151} y={652} anchor="middle">160</Note>
      <Note x={1151} y={665} anchor="middle">145</Note>
      <Note x={1150} y={629} rotate={-90} anchor="middle">300</Note>
      <Note x={1136} y={630} rotate={90} anchor="middle">520</Note>
      <Note x={1161} y={622} rotate={90} anchor="middle">425</Note>
      <Note x={1166} y={636} rotate={-90} anchor="middle">425</Note>
      <Note x={1216} y={585} size={9} anchor="middle">0.20</Note>
      <Note x={1235} y={630} size={9} rotate={-90} anchor="middle">0.60</Note>

      <Note x={783} y={315} size={12} color={RED}>E</Note>
      <Note x={975} y={315} size={12} color={RED}>E</Note>
      <Note x={828} y={653} size={12} color={RED}>F</Note>
      <Note x={905} y={653} size={12} color={RED}>F</Note>
      <Note x={863} y={745} size={12} color={RED}>E-E</Note>
      <Note x={1207} y={680} size={12} color={RED}>F-F</Note>

      <Level x={982} y={662.5}>+0.60</Level>
      <Level x={982} y={716.5}>+0.10</Level>
      <Level x={1019} y={726.5}>±0.00</Level>

      <path d="M299.500 731v41.500H342M296.500 768.500h7v7h-7z" stroke="#d0d3d6" fill="none" />
      <Note x={301} y={728} size={16} color="#9fa4aa">Y</Note>
      <Note x={345} y={772} size={16} color="#9fa4aa">X</Note>
      <path d="M1565.500 122v2000" stroke="#e9e9e9" />
    </g>
  </Sheet>
);

const ViewCube = () => (
  <svg width="110" height="120" viewBox="0 0 110 120" fontFamily="'Liberation Sans', Arial, sans-serif" fontSize="18" fontWeight="700" textAnchor="middle" fill="#b4b7ba">
    <circle cx="55" cy="60" r="45" fill="none" stroke="#444b53" strokeWidth="11" />
    <rect x="33.500" y="38.500" width="43" height="43" fill="#abadb0" stroke="#94979a" />
    <rect x="41" y="47" width="27" height="27" fill="#9ca4aa" />
    <text x="55" y="64" fontSize="11" fontFamily="'Open Sans', sans-serif" fill="#4d5459">TOP</text>
    <text x="55" y="20">N</text>
    <text x="55" y="114">S</text>
    <text x="9" y="67">W</text>
    <text x="102" y="67">E</text>
  </svg>
);

const RibbonPanel = ({ panel }) => (
  <Panel $width={panel.width}>
    <PanelBody $pad={panel.pad}>
      {panel.big.map(([icon, label, width]) => (
        <BigButton key={icon} $width={width} $active={icon === 'mainTable'}>
          <Icon size={32} box={32}>{bigGlyphs[icon]}</Icon>
          {label}
        </BigButton>
      ))}
      <IconGrid $gap={panel.gap}>
        {panel.small.map((name, i) => (
          <GridButton key={i} aria-label={name}><Icon size={14}>{glyphs[name]}</Icon></GridButton>
        ))}
      </IconGrid>
      {panel.rule && <ToolsRule />}
    </PanelBody>
    <PanelTitle>{panel.title}{panel.more && <Caret />}</PanelTitle>
  </Panel>
);

const App = () => {
  const [tab, setTab] = useState('ASD - Reinforcement');
  const [paletteTab, setPaletteTab] = useState('Model');
  const [layout, setLayout] = useState('Model');

  return (
    <Window>
      <GlobalStyle />
      <TitleBar>
        <AppButton aria-label="Application menu">
          <svg width="32" height="32" viewBox="0 0 32 32">
            <path d="M12 2h4l8 19-5-1-4-6-3 8-10 2z" fill="#c62a20" />
            <path d="M12 2l1 10-11 12z" fill="#96130f" />
            <path d="M13 12l6 8-8 0z" fill="#e46356" />
            <path d="M25 14h6l-3 3.500z" fill="#222" />
            <text x="15.500" y="31" fontSize="7" textAnchor="middle" fill="#111">SD</text>
          </svg>
        </AppButton>
        <QuickAccess>
          {['newFile', 'open', 'save', 'saveAs', 'print', 'undo'].map((n) => (
            <BarButton key={n} aria-label={n}><Icon size={14}>{glyphs[n]}</Icon></BarButton>
          ))}
          <BarButton $width={9} aria-label="Undo list"><Caret size={4} /></BarButton>
          <BarButton aria-label="Redo"><Icon size={14}>{glyphs.redo}</Icon></BarButton>
          <BarButton $width={10} aria-label="Redo list"><Caret size={4} /></BarButton>
          <BarButton aria-label="Dimension"><Icon size={15}>{glyphs.dim}</Icon></BarButton>
          <BarButton $width={9} aria-label="Dimension list"><Caret size={5} /></BarButton>
          <BarButton aria-label="Continuous dimension"><Icon size={15}>{glyphs.dimCont}</Icon></BarButton>
          <BarButton $width={8} aria-label="Continuous list"><Caret size={5} /></BarButton>
          <BarButton $width={22} aria-label="Line"><Icon size={14}>{glyphs.line}</Icon></BarButton>
          <BarButton $width={14} aria-label="Customize">
            <svg width="8" height="7" viewBox="0 0 8 7"><path d="M0 .5h8" stroke="#333" /><path d="M0 2.500h8L4 7z" fill="#333" /></svg>
          </BarButton>
        </QuickAccess>
        <Title>{'Autodesk AutoCAD Structural Detailing 2015    left side FOOTING.dwg'}</Title>
        <InfoCenter>
          <BarButton $width={11} aria-label="Collapse search"><svg width="4" height="6" viewBox="0 0 4 6"><path d="M0 0l4 3-4 3z" fill="#333" /></svg></BarButton>
          <Search aria-label="Search" placeholder="Type a keyword or phrase" />
          <BarButton aria-label="Find"><Icon>{glyphs.binoculars}</Icon></BarButton>
          <SignIn><Icon>{glyphs.user}</Icon>Sign In<Caret size={5} /></SignIn>
          <BarButton $width={24} aria-label="Exchange"><Icon size={14}>{glyphs.exchange}</Icon></BarButton>
          <BarButton $width={32} aria-label="Help">
            <svg width="15" height="15" viewBox="0 0 15 15">
              <circle cx="7.500" cy="7.500" r="6.500" fill="#f5f5f5" stroke="#555" />
              <text x="7.500" y="11" fontSize="10" fontWeight="700" textAnchor="middle" fill="#2d5db0">?</text>
            </svg>
          </BarButton>
          <BarButton $width={10} aria-label="Help list"><Caret size={5} /></BarButton>
        </InfoCenter>
        <WindowButtons>
          <WindowButton aria-label="Minimize"><svg width="9" height="9"><path d="M0 4.500h9" stroke="#222" /></svg></WindowButton>
          <WindowButton aria-label="Restore"><svg width="9" height="9" fill="none" stroke="#222"><path d="M.5 2.500h6v6h-6zM2.500 2V.5h6v6H7" /></svg></WindowButton>
          <WindowButton aria-label="Close"><svg width="9" height="9"><path d="M.5.5l8 8M8.500.5l-8 8" stroke="#222" /></svg></WindowButton>
        </WindowButtons>
      </TitleBar>

      <TabBar>
        {ribbonTabs.map((name) => (
          <RibbonTab key={name} $active={name === tab} onClick={() => setTab(name)}>{name}</RibbonTab>
        ))}
        <TabExtra aria-label="Minimize ribbon">
          <svg width="12" height="8" viewBox="0 0 12 8"><rect x=".5" y=".5" width="11" height="7" rx="1" fill="#f4f4f4" stroke="#555" /><path d="M4 5h4L6 3z" fill="#222" /></svg>
          <Caret size={5} />
        </TabExtra>
      </TabBar>

      <Ribbon>
        {panels.map((panel) => <RibbonPanel key={panel.title} panel={panel} />)}
      </Ribbon>

      <Workspace>
        <Palette>
          <Grip><svg width="4" height="9"><path d="M.5 0v9M2.500 0v9" stroke="#aaa" strokeDasharray="1 1" /></svg></Grip>
          <FilterRow>
            <SelectWrap>
              <ObjectSelect aria-label="Objects" defaultValue="All objects">
                <option>All objects</option>
              </ObjectSelect>
              <svg width="8" height="8" fill="none"><path d="M.5 2L4 5.500 7.500 2" stroke="#555" /></svg>
            </SelectWrap>
            <PushButton $width={24} $height={23} aria-label="Filter">
              <svg width="16" height="16" viewBox="0 0 16 16"><path d="M1 2h9L7 8v5l-2-2V8z" fill="#666" stroke="#222" /><path d="M9 8l4-5 2 2v4l-4 4-3 1z" fill="#ecc77a" stroke="#a8813a" strokeWidth=".8" /></svg>
            </PushButton>
          </FilterRow>
          <ButtonRow>
            <PushButton>Show</PushButton>
            <PushButton>Hide</PushButton>
            <PushButton>Select</PushButton>
          </ButtonRow>
          <PaletteTabs>
            {['Model', 'Positions', 'Printouts', 'ASD Center'].map((name) => (
              <PaletteTab key={name} $active={name === paletteTab} onClick={() => setPaletteTab(name)}>{name}</PaletteTab>
            ))}
          </PaletteTabs>
          <TabPage><Tree /></TabPage>
          <PropertyTable aria-label="Properties">
            <tbody>
              {[0, 1, 2, 3].map((row) => <tr key={row}><td /><td /><td /></tr>)}
            </tbody>
          </PropertyTable>
        </Palette>

        <DrawingColumn>
          <Viewport>
            <ModelSpace />
            <ViewLabel>[−][Top][2D Wireframe]</ViewLabel>
            <ViewButtons>
              <PlainButton aria-label="Minimize drawing"><svg width="12" height="12"><path d="M2 9.500h8" stroke="#fff" strokeWidth="2.500" /></svg></PlainButton>
              <PlainButton aria-label="Restore drawing"><svg width="12" height="12" fill="none" stroke="#fff" strokeWidth="1.500"><path d="M2 4.500h6v6H2zM4 4V2h6v6H8" /><path d="M4 7.500h2" /></svg></PlainButton>
              <PlainButton aria-label="Close drawing"><svg width="12" height="12"><path d="M3 3l6 7M9 3l-6 7" stroke="#fff" strokeWidth="2" /></svg></PlainButton>
            </ViewButtons>
            <CubeArea>
              <ViewCube />
              <Wcs>WCS<svg width="5" height="4"><path d="M0 0h5L2.500 3.500z" fill="#a9adb2" /></svg></Wcs>
            </CubeArea>
          </Viewport>
          <Command>
            <CommandHandle>
              <svg width="14" height="5"><path d="M0 .5h14M0 2.500h14M0 4.500h14" stroke="#c4c4c4" strokeDasharray="1 1" /></svg>
              <PlainButton aria-label="Close command line"><svg width="8" height="8"><path d="M1 1l6 6M7 1L1 7" stroke="#fff" strokeWidth="1.800" /></svg></PlainButton>
              <PlainButton aria-label="Customize command line"><svg width="12" height="12" viewBox="0 0 12 12"><path d="M4 4l6 7" stroke="#fff" strokeWidth="2.500" /><path d="M3 1a2.500 2.500 0 1 0 3 2" fill="none" stroke="#fff" strokeWidth="1.800" /></svg></PlainButton>
            </CommandHandle>
            <CommandBody>
              <History>{'Specify second point or <use first point as displacement>:'}</History>
              <CommandLine>
                <PlainButton aria-label="Recent commands">
                  <svg width="20" height="12" viewBox="0 0 20 12"><rect x=".5" y=".5" width="12" height="11" rx="1" fill="#e4e8ec" stroke="#9aa3ac" /><path d="M3 3l3 3-3 3M7 9h4" fill="none" stroke="#444" /><path d="M16 5h4l-2 2.500z" fill="#666" /></svg>
                </PlainButton>
                <CommandInput aria-label="Command" placeholder="Type a command" />
              </CommandLine>
            </CommandBody>
          </Command>
        </DrawingColumn>

        <Watermark>
          <WatermarkArabic lang="ar" dir="rtl">مستقل</WatermarkArabic>
          <WatermarkLatin>mostaql.com</WatermarkLatin>
        </Watermark>
      </Workspace>

      <StatusBar>
        <LayoutTabs>
          {['Model', 'Layout1', 'Layout2'].map((name) => (
            <LayoutTab key={name} $active={name === layout} onClick={() => setLayout(name)}>{name}</LayoutTab>
          ))}
          <LayoutTab $width={24} aria-label="New layout">✚</LayoutTab>
        </LayoutTabs>
        <StatusTools>
          <StatusButton $width={124}>516.5232, 22.6767, 0.0000</StatusButton>
          <StatusButton $width={42}>MODEL</StatusButton>
          {statusItems.map((name, i) => (name === '|'
            ? <StatusButton key={i} $width={12} aria-label="Options"><Caret size={6} /></StatusButton>
            : <StatusButton key={i} aria-label={name}><Icon>{statusGlyphs[name]}</Icon></StatusButton>
          ))}
          <StatusButton $width={60}>1:1 / 100%&nbsp;<Caret size={6} /></StatusButton>
          <StatusButton aria-label="Workspace"><Icon>{statusGlyphs.gear}</Icon></StatusButton>
          <StatusButton $width={12} aria-label="Workspace list"><Caret size={6} /></StatusButton>
          <StatusButton aria-label="Annotation monitor"><Icon>{statusGlyphs.plus}</Icon></StatusButton>
          <StatusButton aria-label="Units"><Icon>{statusGlyphs.ruler}</Icon></StatusButton>
          <StatusButton $width={44}>Decimal</StatusButton>
          <StatusButton $width={14} aria-label="Units list"><Caret size={6} /></StatusButton>
          {['quick', 'graphics', 'plot', 'isolate', 'clean', 'menu'].map((name) => (
            <StatusButton key={name} aria-label={name}><Icon>{statusGlyphs[name]}</Icon></StatusButton>
          ))}
        </StatusTools>
      </StatusBar>
    </Window>
  );
};

export default App;
